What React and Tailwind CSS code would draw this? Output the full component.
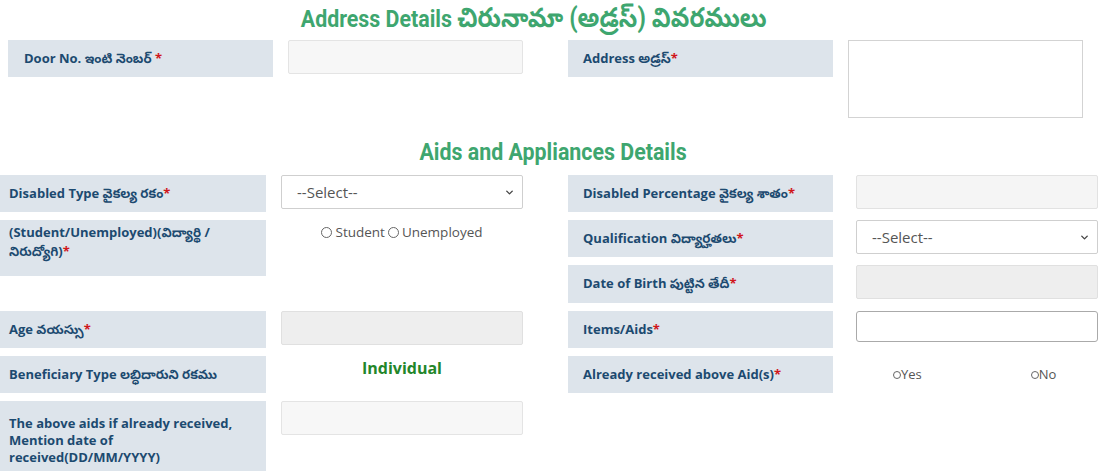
import { ChevronDown } from 'lucide-react';

const labelFont = { fontFamily: '"Open Sans", "Noto Sans Telugu", "Noto Sans", sans-serif' };

function Label({ children, className = '' }) {
  return (
    <div
      className={`bg-[#dde4eb] text-[#1c4a70] text-[13px] font-bold ${className}`}
      style={labelFont}
    >
      {children}
    </div>
  );
}

const Star = () => <span className="text-[#d0161b]">*</span>;

function Select() {
  return (
    <div className="relative w-[242px] h-[34px]">
      <select
        className="w-full h-full appearance-none bg-white border border-[#cfcfcf] rounded-[2px] pl-[15px] text-[15px] text-[#555]"
        style={labelFont}
      >
        <option>--Select--</option>
      </select>
      <ChevronDown className="absolute right-[8px] top-[12px] h-[11px] w-[11px] text-[#444] pointer-events-none" strokeWidth={3} />
    </div>
  );
}

function Radio({ small }) {
  return (
    <span
      className={`inline-block rounded-full border border-[#666] bg-white ${small ? 'w-[8px] h-[8px]' : 'w-[11px] h-[11px]'}`}
    />
  );
}

function Heading({ children, className = '' }) {
  return (
    <div className={`flex justify-center ${className}`}>
      <h2
        className="text-[24px] font-bold text-[#3ea66f] leading-none scale-x-[0.89] whitespace-nowrap"
        style={{ fontFamily: 'Roboto, "Noto Sans Telugu", "Noto Sans", sans-serif' }}
      >
        {children}
      </h2>
    </div>
  );
}

export default function App() {
  return (
    <div className="w-[1100px] h-[471px] bg-white overflow-hidden" style={labelFont}>
      {/* Address */}
      <div className="pt-[5px]">
        <Heading className="pr-[32px]">
          Address Details <span className="text-[27px]">చిరునామా (అడ్రస్) వివరములు</span>
        </Heading>
      </div>
      <div className="flex mt-[8px]">
        <div className="flex pl-[8px] w-[568px] items-start">
          <Label className="w-[265px] h-[37px] flex items-center pl-[16px]">
            Door No. ఇంటి నెంబర్&nbsp;<Star />
          </Label>
          <div className="ml-[15px] w-[235px] h-[34px] bg-[#f7f7f7] border border-[#e4e4e4] rounded-[2px]" />
        </div>
        <div className="flex items-start">
          <Label className="w-[265px] h-[37px] flex items-center pl-[15px]">
            Address అడ్రస్<Star />
          </Label>
          <textarea className="ml-[15px] w-[235px] h-[78px] bg-white border border-[#d3d3d3] resize-none" />
        </div>
      </div>

      {/* Aids */}
      <div className="mt-[22px]">
        <Heading className="pl-[6px]">Aids and Appliances Details</Heading>
      </div>
      <div className="grid grid-cols-[281px_287px_288px_244px] grid-rows-[37px_37px_38px_37px_37px_auto] gap-y-[8px] mt-[11px]">
        <Label className="w-[266px] flex items-center pl-[9px]">
          Disabled Type వైకల్య రకం<Star />
        </Label>
        <Select />
        <Label className="w-[265px] flex items-center pl-[15px]">
          Disabled Percentage వైకల్య శాతం<Star />
        </Label>
        <div className="w-[242px] h-[34px] bg-[#f5f5f5] border border-[#e2e2e2] rounded-[2px]" />

        <Label className="w-[266px] h-[56px] row-span-2 pl-[9px] pt-[3px] leading-[19px] self-start">
          (Student/Unemployed)(విద్యార్థి /
          <br />
          నిరుద్యోగి)<Star />
        </Label>
        <div className="row-span-2 w-[242px] flex justify-center items-center gap-[3px] h-[24px] text-[13.5px] text-[#555]">
          <Radio /> <span>Student</span> <Radio /> <span>Unemployed</span>
        </div>
        <Label className="w-[265px] flex items-center pl-[15px]">
          Qualification విద్యార్హతలు<Star />
        </Label>
        <Select />

        <Label className="col-start-3 w-[265px] flex items-center pl-[15px]">
          Date of Birth పుట్టిన తేదీ<Star />
        </Label>
        <div className="w-[242px] h-[34px] bg-[#eeeeee] border border-[#e0e0e0] rounded-[2px]" />

        <Label className="w-[266px] flex items-center pl-[9px]">
          Age వయస్సు<Star />
        </Label>
        <div className="w-[242px] h-[34px] bg-[#eeeeee] border border-[#e0e0e0] rounded-[2px]" />
        <Label className="w-[265px] flex items-center pl-[15px]">
          Items/Aids<Star />
        </Label>
        <div className="w-[242px] h-[31px] bg-white border border-[#aaa] rounded-[3px]" />

        <Label className="w-[266px] flex items-center pl-[9px]">
          Beneficiary Type లబ్ధిదారుని రకము
        </Label>
        <div className="w-[242px] flex justify-center items-start">
          <span className="text-[16px] font-bold text-[#23862a]">Individual</span>
        </div>
        <Label className="w-[265px] flex items-center pl-[15px]">
          Already received above Aid(s)<Star />
        </Label>
        <div className="w-[242px] flex items-center text-[13px] text-[#555]">
          <span className="ml-[37px] flex items-center">
            <Radio small />Yes
          </span>
          <span className="ml-[109px] flex items-center">
            <Radio small />No
          </span>
        </div>

        <Label className="w-[266px] min-h-[70px] pl-[9px] pt-[14px] pb-[3px] leading-[17px]">
          The above aids if already received,
          <br />
          Mention date of
          <br />
          received(DD/MM/YYYY)
        </Label>
        <div className="w-[242px] h-[34px] bg-[#f7f7f7] border border-[#e4e4e4] rounded-[2px]" />
      </div>
    </div>
  );
}
